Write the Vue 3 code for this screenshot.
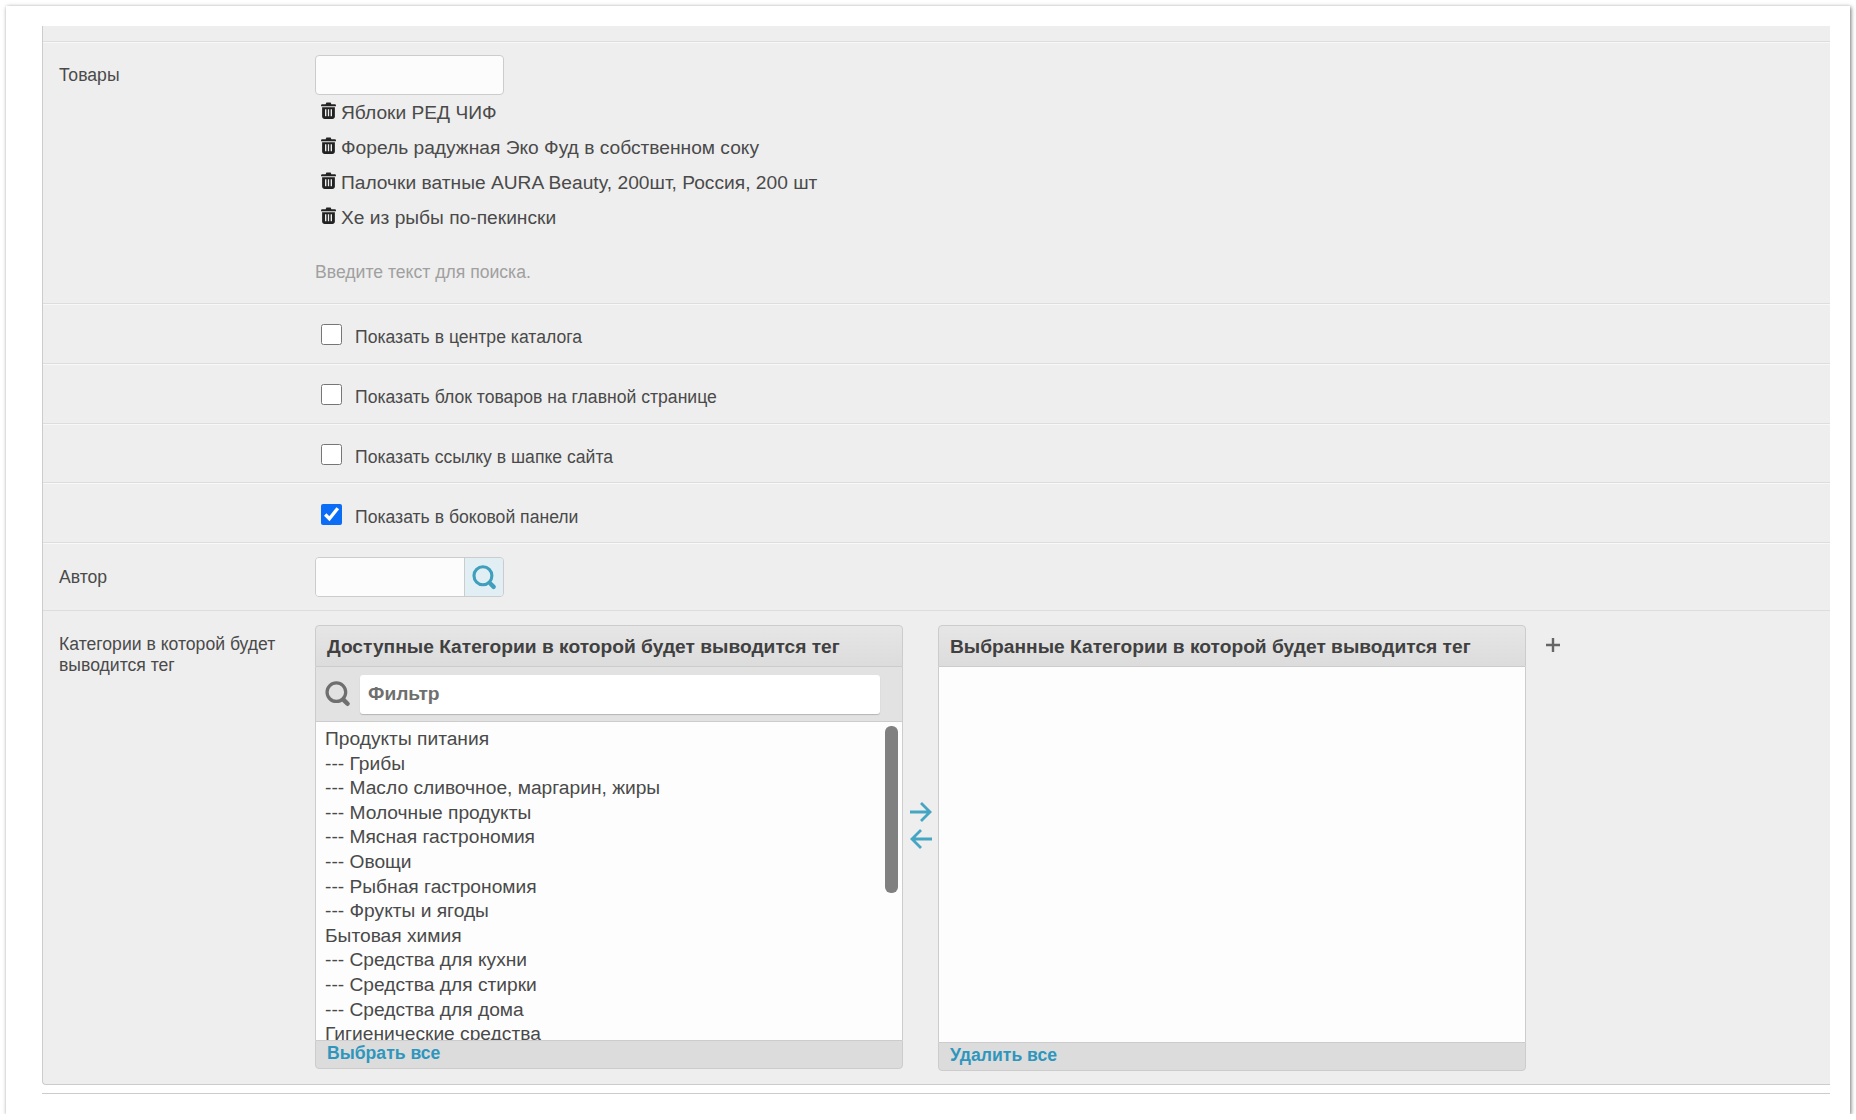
<script setup>
const products = [
  'Яблоки РЕД ЧИФ',
  'Форель радужная Эко Фуд в собственном соку',
  'Палочки ватные AURA Beauty, 200шт, Россия, 200 шт',
  'Хе из рыбы по-пекински'
]
const checks = [
  { text: 'Показать в центре каталога', on: false, h: 60, pad: 0 },
  { text: 'Показать блок товаров на главной странице', on: false, h: 60, pad: 0 },
  { text: 'Показать ссылку в шапке сайта', on: false, h: 59, pad: 0 },
  { text: 'Показать в боковой панели', on: true, h: 60, pad: 1 }
]
const categories = [
  'Продукты питания', '--- Грибы', '--- Масло сливочное, маргарин, жиры', '--- Молочные продукты',
  '--- Мясная гастрономия', '--- Овощи', '--- Рыбная гастрономия', '--- Фрукты и ягоды',
  'Бытовая химия', '--- Средства для кухни', '--- Средства для стирки', '--- Средства для дома',
  'Гигиенические средства'
]
</script>

<template>
  <div class="card">
    <div class="panel">
      <div class="row row-top"></div>

      <div class="row row-products">
        <div class="label">Товары</div>
        <div class="control">
          <input class="text-input" type="text" />
          <ul class="items">
            <li v-for="p in products" :key="p" class="item">
              <svg class="trash" viewBox="0 0 14 16" width="15" height="17">
                <path d="M5 .4h4l.7 1.6H13a1 1 0 0 1 1 1v1H0V3a1 1 0 0 1 1-1h3.3z" fill="#222"/>
                <path fill-rule="evenodd" d="M1 5h12v8.6c0 1.4-1 2.4-2.4 2.4H3.4C2 16 1 15 1 13.6zM3.7 6.8v6.6h1.3V6.8zm2.7 0v6.6h1.2V6.8zm2.6 0v6.6h1.3V6.8z" fill="#222"/>
              </svg>
              <span>{{ p }}</span>
            </li>
          </ul>
          <div class="help">Введите текст для поиска.</div>
        </div>
      </div>

      <div v-for="c in checks" :key="c.text" class="row row-check" :style="{ height: c.h + 'px', paddingTop: c.pad + 'px' }">
        <label class="check">
          <input type="checkbox" :checked="c.on" />
          <span>{{ c.text }}</span>
        </label>
      </div>

      <div class="row row-author">
        <div class="label">Автор</div>
        <div class="search-group">
          <input class="search-input" type="text" />
          <span class="search-btn">
            <svg viewBox="0 0 24 24" width="25" height="25">
              <circle cx="10.5" cy="10.3" r="8.6" fill="none" stroke="#3f9fbc" stroke-width="3"/>
              <path d="M17.6 17.8l3.2 3.2" stroke="#3f9fbc" stroke-width="4.2" stroke-linecap="round"/>
            </svg>
          </span>
        </div>
      </div>

      <div class="row row-dual">
        <div class="label label-cat">Категории в которой будет выводится тег</div>
        <div class="dual">
          <section class="box box-left">
            <header class="box-head">Доступные Категории в которой будет выводится тег</header>
            <div class="filter">
              <svg viewBox="0 0 24 24" width="26" height="26">
                <circle cx="10.5" cy="10.3" r="8.6" fill="none" stroke="#6f6f6f" stroke-width="3"/>
                <path d="M17.6 17.8l3.2 3.2" stroke="#6f6f6f" stroke-width="4.2" stroke-linecap="round"/>
              </svg>
              <input class="filter-input" type="text" placeholder="Фильтр" />
            </div>
            <div class="list">
              <div v-for="c in categories" :key="c" class="opt">{{ c }}</div>
              <div class="thumb"></div>
            </div>
            <footer class="box-foot">Выбрать все</footer>
          </section>

          <div class="arrows">
            <svg viewBox="0 0 22 20" width="22" height="20">
              <path d="M0 10h20M11 1l9 9-9 9" fill="none" stroke="#45a5c2" stroke-width="2.8"/>
            </svg>
            <svg viewBox="0 0 22 20" width="22" height="20">
              <path d="M22 10H2M11 1l-9 9 9 9" fill="none" stroke="#45a5c2" stroke-width="2.8"/>
            </svg>
          </div>

          <section class="box box-right">
            <header class="box-head">Выбранные Категории в которой будет выводится тег</header>
            <div class="selected"></div>
            <footer class="box-foot">Удалить все</footer>
          </section>

          <svg class="plus" viewBox="0 0 14 14" width="14" height="14">
            <path d="M7 0v14M0 7h14" stroke="#666" stroke-width="2.4"/>
          </svg>
        </div>
      </div>
    </div>
    <div class="rule"></div>
  </div>
</template>

<style>
html, body { margin: 0; background: #fff; }
</style>

<style scoped>
.card {
  box-sizing: border-box;
  width: 1844px;
  height: 1108px;
  margin: 6px 0 0 6px;
  padding: 20px 20px 0 36px;
  background: #fff;
  box-shadow: 1px 1px 4px rgba(0, 0, 0, .55);
  font-family: "Liberation Sans", Arial, sans-serif;
  color: #4a4a4a;
}
.panel {
  box-sizing: border-box;
  height: 1059px;
  background: #eee;
  border-left: 1px solid #ccc;
  border-bottom: 1px solid #ccc;
  border-bottom-left-radius: 4px;
}
.rule { height: 1px; margin-top: 8px; background: #ccc; }
.row {
  box-sizing: border-box;
  display: flex;
  padding-left: 16px;
  border-top: 1px solid #f8f8f8;
  border-bottom: 1px solid #ddd;
}
.row-top { height: 16px; border-top: 0; }
.row-products { height: 262px; padding-top: 12px; }
.label {
  flex: 0 0 256px;
  box-sizing: border-box;
  padding-right: 30px;
  font-size: 17.6px;
  line-height: 21px;
}
.row-products .label { padding-top: 10px; }
.control { display: flex; flex-direction: column; }
.text-input {
  box-sizing: border-box;
  width: 189px;
  height: 40px;
  background: #fcfcfc;
  border: 1px solid #ccc;
  border-radius: 4px;
}
.items { list-style: none; margin: 0; padding: 0; }
.item {
  display: flex;
  align-items: flex-start;
  height: 35px;
  margin-left: 6px;
  font-size: 19.2px;
  line-height: 35px;
}
.trash { margin: 7px 5px 0 0; flex: none; }
.help { margin-top: 27px; font-size: 17.6px; line-height: 21px; color: #a0a0a0; }

.row-check { padding-left: 272px; }
.check { display: flex; align-items: flex-start; font-size: 17.6px; }
.check input {
  width: 21px;
  height: 21px;
  margin: 19px 13px 0 6px;
  accent-color: #0b6cf5;
}
.check span { margin-top: 22px; line-height: 21px; }

.row-author { height: 68px; align-items: center; }
.search-group {
  display: flex;
  box-sizing: border-box;
  width: 189px;
  height: 40px;
  border: 1px solid #ccc;
  border-radius: 4px;
  overflow: hidden;
}
.search-input {
  box-sizing: border-box;
  width: 149px;
  border: 0;
  border-right: 1px solid #ccc;
  background: #fcfcfc;
  padding: 0;
}
.search-btn {
  flex: 1;
  display: flex;
  align-items: center;
  justify-content: center;
  background: #e1eff5;
}

.row-dual { border: 0; padding-top: 14px; }
.label-cat { padding-top: 9px; }
.dual { display: flex; align-items: flex-start; }
.box { box-sizing: border-box; width: 588px; }
.box-head {
  box-sizing: border-box;
  height: 42px;
  padding: 0 11px;
  font-size: 19.2px;
  font-weight: bold;
  line-height: 42px;
  white-space: nowrap;
  color: #404040;
  background: linear-gradient(#e6e6e6, #dcdcdc);
  border: 1px solid #ccc;
  border-radius: 4px 4px 0 0;
}
.filter {
  box-sizing: border-box;
  display: flex;
  align-items: center;
  gap: 9px;
  height: 55px;
  padding: 0 22px 0 9px;
  background: #e2e2e2;
  border: 1px solid #ccc;
  border-top: 0;
}
.filter-input {
  box-sizing: border-box;
  flex: 1;
  height: 39px;
  padding: 0 8px;
  font: bold 19.2px "Liberation Sans", Arial, sans-serif;
  background: #fff;
  border: 0;
  border-radius: 3px;
  box-shadow: 0 1px 1px rgba(0, 0, 0, .2);
}
.filter-input::placeholder { color: #6f6f6f; opacity: 1; }
.list {
  box-sizing: border-box;
  position: relative;
  height: 318px;
  padding: 5px 9px 0;
  overflow: hidden;
  background: #fdfdfd;
  border-left: 1px solid #ccc;
  border-right: 1px solid #ccc;
  font-size: 19.2px;
  line-height: 24.6px;
}
.thumb {
  position: absolute;
  top: 4px;
  right: 4px;
  width: 13px;
  height: 167px;
  background: #808080;
  border-radius: 6px;
}
.box-foot {
  box-sizing: border-box;
  height: 29px;
  padding: 0 11px;
  font-size: 17.6px;
  font-weight: bold;
  line-height: 24px;
  color: #2e96bd;
  background: #dcdcdc;
  border: 1px solid #ccc;
  border-radius: 0 0 4px 4px;
}
.arrows {
  flex: 0 0 35px;
  display: flex;
  flex-direction: column;
  align-items: center;
  gap: 7px;
  padding-top: 177px;
}
.selected {
  box-sizing: border-box;
  height: 375px;
  background: #fdfdfd;
  border-left: 1px solid #ccc;
  border-right: 1px solid #ccc;
}
.plus { margin: 13px 0 0 20px; }
</style>
